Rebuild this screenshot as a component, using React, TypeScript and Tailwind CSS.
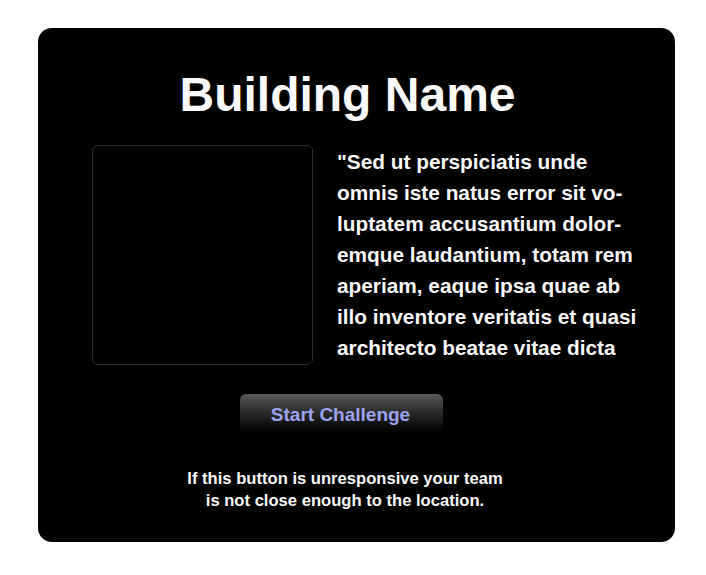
import React from "react";

export default function App() {
  const lines = [
    "\"Sed ut perspiciatis unde",
    "omnis iste natus error sit vo-",
    "luptatem accusantium dolor-",
    "emque laudantium, totam rem",
    "aperiam, eaque ipsa quae ab",
    "illo inventore veritatis et quasi",
    "architecto beatae vitae dicta",
  ];
  return (
    <div className="min-h-[575px] w-[706px] bg-white pt-[28px] pl-[38px]" style={{ fontFamily: '"Liberation Sans", Arial, sans-serif' }}>
      <div className="w-[637px] h-[514px] bg-black rounded-[14px] flex flex-col pt-[39px]">
        <h1 className="w-[614px] text-center text-[48px] leading-[55px] font-bold text-[#fafafa] pl-[5px]">
          Building Name
        </h1>
        <div className="flex mt-[23px] pl-[54px] gap-[24px]">
          <div className="w-[221px] h-[220px] shrink-0 border border-[#2c2c2c] rounded-[6px] bg-black" />
          <div className="mt-[1px] text-[20.8px] leading-[31px] font-bold text-[#fafafa] whitespace-nowrap">
            {lines.map((l, i) => (
              <div key={i}>{l}</div>
            ))}
          </div>
        </div>
        <div className="mt-[29px] ml-[202px]">
          <button className="w-[203px] h-[48px] rounded-[6px] bg-gradient-to-b from-[#5a5a5a] to-[#000000] text-[#9ea3f2] text-[19px] font-bold flex items-start justify-center pt-[10px] leading-[22px] pr-[2px]">
            Start Challenge
          </button>
        </div>
        <div className="mt-[26px] w-[614px] text-center text-[16.6px] leading-[22px] font-bold text-[#fafafa]">
          <div>If this button is unresponsive your team</div>
          <div>is not close enough to the location.</div>
        </div>
      </div>
    </div>
  );
}
